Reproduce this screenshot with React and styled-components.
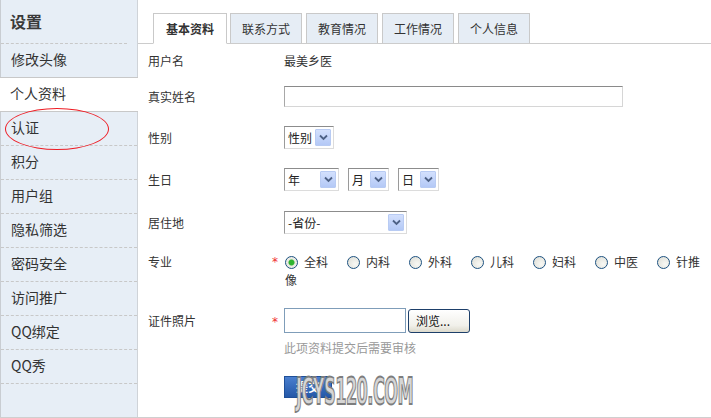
import React from "react";
import styled, { createGlobalStyle } from "styled-components";

const GlobalStyle = createGlobalStyle`
  html, body {
    margin: 0;
    padding: 0;
    background: #fff;
  }
  body {
    font-family: "Noto Sans CJK SC", "DejaVu Sans", sans-serif;
    color: #333;
  }
`;

const menuItems = ["修改头像", "个人资料", "认证", "积分", "用户组", "隐私筛选", "密码安全", "访问推广", "QQ绑定", "QQ秀"];
const tabs = ["基本资料", "联系方式", "教育情况", "工作情况", "个人信息"];
const majors = ["全科", "内科", "外科", "儿科", "妇科", "中医", "针推"];

const Chevron = () => (
  <svg width="9" height="7" viewBox="0 0 9 7">
    <path d="M1 1.5 L4.5 5 L8 1.5" fill="none" stroke="#4d6185" strokeWidth="1.8" />
  </svg>
);

const Select = ({ label, width }) => (
  <SelectBox width={width}>
    <SelectText>{label}</SelectText>
    <ArrowButton>
      <Chevron />
    </ArrowButton>
  </SelectBox>
);

const App = () => {
  return (
    <>
      <GlobalStyle />
      <Page>
        <Sidebar>
          <SideTitle>设置</SideTitle>
          {menuItems.map((item) => (
            <MenuItem key={item} active={item === "个人资料"}>
              {item}
            </MenuItem>
          ))}
          <Circle />
        </Sidebar>
        <Main>
          <TabBar>
            {tabs.map((t, i) => (
              <Tab key={t} active={i === 0}>
                {t}
              </Tab>
            ))}
          </TabBar>
          <Form>
            <FormRow height={32}>
              <Label>用户名</Label>
              <Star />
              <Value>最美乡医</Value>
            </FormRow>
            <FormRow height={40}>
              <Label>真实姓名</Label>
              <Star />
              <TextInput width={339} />
            </FormRow>
            <FormRow height={42}>
              <Label>性别</Label>
              <Star />
              <Select label="性别" width={50} />
            </FormRow>
            <FormRow height={43}>
              <Label>生日</Label>
              <Star />
              <SelectGroup>
                <Select label="年" width={55} />
                <Select label="月" width={41} />
                <Select label="日" width={41} />
              </SelectGroup>
            </FormRow>
            <FormRow height={42}>
              <Label>居住地</Label>
              <Star />
              <Select label="-省份-" width={123} />
            </FormRow>
            <TopRow pad={10} height={62}>
              <Label line={18}>专业</Label>
              <Star line={18}>*</Star>
              <RadioList>
                <RadioLine>
                  {majors.map((m, i) => (
                    <RadioItem key={m} last={i === majors.length - 1}>
                      <Radio checked={i === 0} />
                      {m}
                    </RadioItem>
                  ))}
                </RadioLine>
                <RadioLine>像</RadioLine>
              </RadioList>
            </TopRow>
            <TopRow pad={3} height={35}>
              <Label line={25}>证件照片</Label>
              <Star line={20}>*</Star>
              <FileGroup>
                <FileInput />
                <BrowseButton>浏览...</BrowseButton>
              </FileGroup>
            </TopRow>
            <HintRow>此项资料提交后需要审核</HintRow>
            <SubmitRow>
              <SubmitButton>提交</SubmitButton>
              <Watermark>JCYS120.COM</Watermark>
            </SubmitRow>
          </Form>
        </Main>
      </Page>
    </>
  );
};

const Page = styled.div`
  display: flex;
  width: 711px;
  height: 418px;
  box-sizing: border-box;
  border-bottom: 1px solid #cfcfcf;
  overflow: hidden;
`;

const Sidebar = styled.div`
  position: relative;
  width: 138px;
  flex-shrink: 0;
  box-sizing: border-box;
  background-color: #e7eef6;
  border-left: 1px solid #c9cdd2;
  border-right: 1px solid #cfd3d8;
`;

const SideTitle = styled.div`
  height: 43px;
  line-height: 43px;
  padding-left: 9px;
  font-size: 16px;
  font-weight: bold;
  color: #3a3a3a;
  margin: 0 10px 0 0;
  border-bottom: 1px dashed #c8c8c8;
`;

const MenuItem = styled.div`
  height: 33px;
  line-height: 31px;
  font-size: 14px;
  color: #333;
  padding-left: 10px;
  margin-left: ${(p) => (p.active ? "-1px" : "0")};
  margin-right: ${(p) => (p.active ? "-1px" : "0")};
  background: ${(p) => (p.active ? "#fff" : "transparent")};
  border-bottom: 1px dashed #c8c8c8;

  ${(p) =>
    p.active &&
    `
    margin-top: -1px;
    border-top: 1px solid #c8c8c8;
    border-bottom: 1px solid #c8c8c8;
  `}
`;

const Circle = styled.div`
  position: absolute;
  left: 4px;
  top: 108px;
  width: 104px;
  height: 42px;
  border: 1px solid #ee1c24;
  border-radius: 50%;
  box-sizing: border-box;
  pointer-events: none;
`;

const Main = styled.div`
  flex: 1;
  display: flex;
  flex-direction: column;
`;

const TabBar = styled.div`
  display: flex;
  align-items: flex-end;
  gap: 3px;
  height: 44px;
  padding-left: 15px;
  box-sizing: border-box;
  border-bottom: 1px solid #cccccc;
`;

const Tab = styled.div`
  height: 31px;
  box-sizing: border-box;
  padding: 0 ${(p) => (p.active ? "12px" : "11px")};
  margin-bottom: -1px;
  display: flex;
  align-items: center;
  font-size: 12px;
  font-weight: ${(p) => (p.active ? "bold" : "normal")};
  color: #333;
  background: ${(p) => (p.active ? "#fff" : "#e6edf5")};
  border: 1px solid #c9c9c9;
  border-bottom: 1px solid ${(p) => (p.active ? "#fff" : "#cccccc")};
  margin-right: ${(p) => (p.active ? "0" : "1px")};
`;

const Form = styled.div`
  display: flex;
  flex-direction: column;
  padding-left: 10px;
`;

const FormRow = styled.div`
  display: flex;
  align-items: center;
  height: ${(p) => p.height}px;
  font-size: 12px;
`;

const TopRow = styled.div`
  display: flex;
  align-items: flex-start;
  height: ${(p) => p.height}px;
  padding-top: ${(p) => p.pad}px;
  box-sizing: border-box;
  font-size: 12px;
`;

const Label = styled.div`
  width: 124px;
  flex-shrink: 0;
  line-height: ${(p) => (p.line ? `${p.line}px` : "normal")};
  color: #333;
`;

const Star = styled.div`
  width: 12px;
  flex-shrink: 0;
  color: #f03030;
  font-size: 12px;
  line-height: ${(p) => (p.line ? `${p.line}px` : "normal")};
  padding-top: ${(p) => (p.line === 20 ? "4px" : "0")};
  font-family: "DejaVu Sans", sans-serif;
`;

const Value = styled.div`
  color: #333;
`;

const TextInput = styled.div`
  width: ${(p) => p.width}px;
  height: 21px;
  box-sizing: border-box;
  border: 1px solid #d6d6d6;
  border-top: 1px solid #8a8a8a;
  border-left: 1px solid #a8a8a8;
  background: #fff;
`;

const SelectGroup = styled.div`
  display: flex;
  gap: 9px;
`;

const SelectBox = styled.div`
  width: ${(p) => p.width}px;
  height: 23px;
  box-sizing: border-box;
  display: flex;
  align-items: center;
  justify-content: space-between;
  padding: 0 2px 0 3px;
  border: 1px solid #dcdcdc;
  border-top: 1px solid #8c8c8c;
  border-left: 1px solid #9a9a9a;
  background: #fff;
`;

const SelectText = styled.span`
  font-size: 12px;
  color: #222;
  white-space: nowrap;
`;

const ArrowButton = styled.span`
  width: 16px;
  height: 17px;
  box-sizing: border-box;
  display: flex;
  align-items: center;
  justify-content: center;
  background: linear-gradient(#d3e0fd, #b4c9f6);
  border: 1px solid #b8cbf3;
  border-radius: 1px;
`;

const RadioList = styled.div`
  display: flex;
  flex-direction: column;
  width: 420px;
  margin-left: 1px;
  font-size: 12px;
  color: #333;
`;

const RadioLine = styled.div`
  display: flex;
  align-items: center;
  height: 18px;
  line-height: 18px;
`;

const RadioItem = styled.span`
  display: flex;
  align-items: center;
  width: ${(p) => (p.last ? "auto" : "62px")};
  white-space: nowrap;
`;

const Radio = styled.span`
  display: inline-block;
  width: 13px;
  height: 13px;
  box-sizing: border-box;
  border: 1px solid #1c5180;
  border-radius: 50%;
  margin-right: 6px;
  background: ${(p) =>
    p.checked
      ? "radial-gradient(circle, #2fb42f 0 2.5px, #e8e8e0 3.5px, #f6f6f2)"
      : "radial-gradient(circle at 65% 65%, #f8f8f4, #dcdcd4)"};
`;

const FileGroup = styled.div`
  display: flex;
  gap: 2px;
`;

const FileInput = styled.div`
  width: 122px;
  height: 25px;
  box-sizing: border-box;
  border: 1px solid #7f9db9;
  background: #fff;
`;

const BrowseButton = styled.div`
  width: 62px;
  height: 24px;
  margin-top: 1px;
  box-sizing: border-box;
  border: 1px solid #1d3f6a;
  border-radius: 3px;
  background: linear-gradient(#ffffff, #f1f0ea 70%, #dcd9cc);
  font-size: 12px;
  padding-left: 7px;
  line-height: 22px;
  color: #111;
`;

const HintRow = styled.div`
  padding-left: 136px;
  font-size: 12px;
  color: #999;
  line-height: 16px;
`;

const SubmitRow = styled.div`
  position: relative;
  padding-left: 136px;
  margin-top: 20px;
`;

const SubmitButton = styled.div`
  width: 48px;
  height: 22px;
  box-sizing: border-box;
  border: 1px solid #1f4f98;
  background: linear-gradient(#4a7fcf, #2458a8);
  color: #fff;
  font-size: 12px;
  font-weight: bold;
  line-height: 20px;
  padding-left: 11px;
`;

const Watermark = styled.div`
  position: absolute;
  left: 148px;
  top: -4px;
  font-family: "DejaVu Sans", sans-serif;
  font-weight: bold;
  font-size: 30px;
  line-height: 30px;
  letter-spacing: -1px;
  transform: scale(0.54, 1.27);
  transform-origin: left top;
  color: #d6d6d6;
  -webkit-text-stroke: 1.4px #7d7d7d;
  pointer-events: none;
  white-space: nowrap;
`;

export default App;
